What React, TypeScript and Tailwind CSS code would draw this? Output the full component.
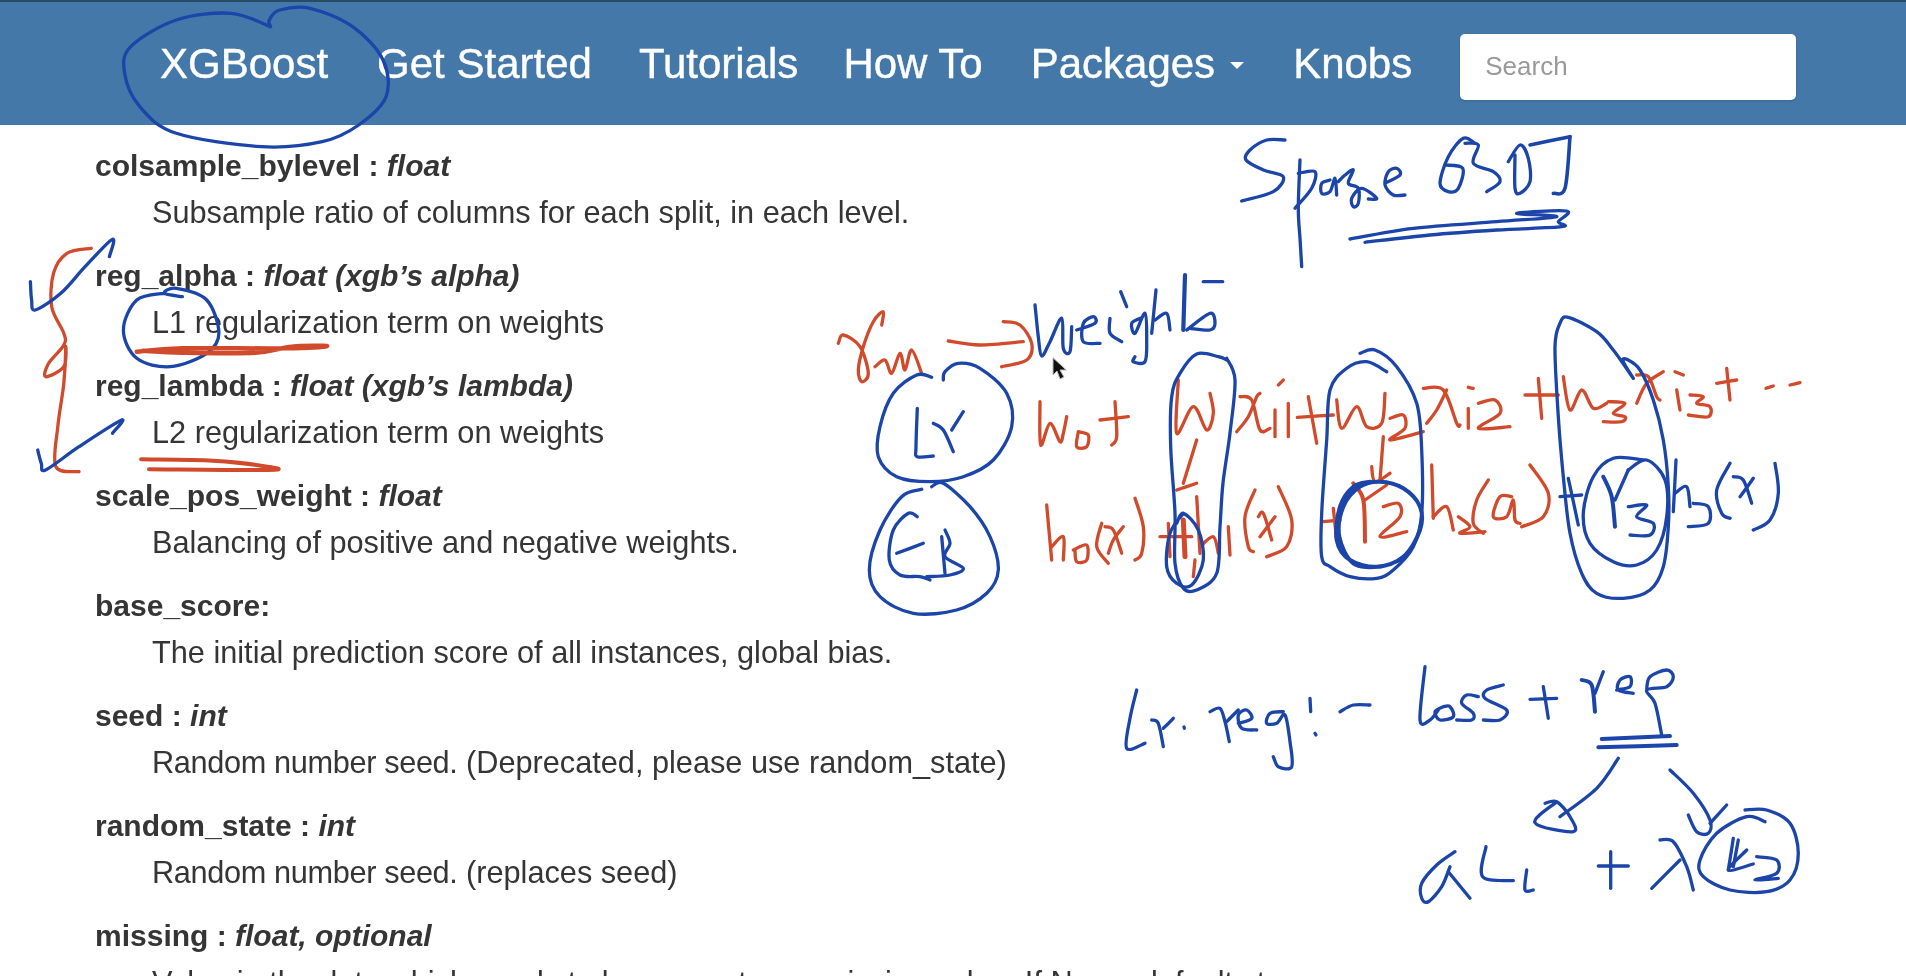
const PARAMS = [
  { name: 'colsample_bylevel', type: ' : ', em: 'float', lead: '', desc: 'Subsample ratio of columns for each split, in each level.' },
  { name: 'reg_alpha', type: ' : ', em: 'float (xgb’s alpha)', lead: '', desc: 'L1 regularization term on weights' },
  { name: 'reg_lambda', type: ' : ', em: 'float (xgb’s lambda)', lead: '', desc: 'L2 regularization term on weights' },
  { name: 'scale_pos_weight', type: ' : ', em: 'float', lead: '', desc: 'Balancing of positive and negative weights.' },
  { name: 'base_score', type: ':', em: '', lead: '', desc: 'The initial prediction score of all instances, global bias.' },
  { name: 'seed', type: ' : ', em: 'int', lead: 'Random number seed.', desc: ' (Deprecated, please use random_state)' },
  { name: 'random_state', type: ' : ', em: 'int', lead: 'Random number seed.', desc: ' (replaces seed)' },
  { name: 'missing', type: ' : ', em: 'float, optional', lead: '', desc: 'Value in the data which needs to be present as a missing value. If None, defaults to np.nan.' },
];

const BLUE = '#1b45a9';
const RED = '#d04a2b';

// pen annotations, traced from crops of the picture: [offset x, offset y, scale x, scale y]
type Frame = [number, number, number, number];
const A: Frame = [0, 0, 0.608, 1 / 3];
const C: Frame = [830, 260, 1 / 3, 1 / 3];
const D: Frame = [1220, 300, 1 / 3, 1 / 3];
const E: Frame = [1500, 300, 1 / 3, 1 / 3];
const G: Frame = [1230, 125, 1 / 3, 1 / 3];
const H: Frame = [1110, 655, 1 / 3, 1 / 3];
const I: Frame = [1400, 660, 1 / 3, 1 / 3];
const J: Frame = [1030, 270, 1 / 3, 1 / 3];

const STROKES: [Frame, string, number[], number?][] = [
  // XGBoost ring and the left margin marks
  [A, BLUE, [445, 80, 380, 40, 290, 60, 215, 140, 205, 220, 230, 320, 290, 400, 430, 440, 530, 425, 590, 375, 635, 290, 630, 180, 580, 80, 510, 25, 460, 30, 443, 60, 445, 80]],
  [A, RED, [150, 745, 110, 760, 88, 820, 85, 920, 105, 1000, 105, 1035, 80, 1090, 75, 1130, 105, 1100, 108, 1040, 105, 1150, 95, 1280, 92, 1400, 130, 1415]],
  [A, BLUE, [50, 845, 52, 900, 58, 930, 100, 880, 140, 800, 185, 718, 180, 770]],
  [A, BLUE, [62, 1350, 68, 1390, 75, 1410, 130, 1340, 200, 1260, 185, 1300]],
  [A, BLUE, [300, 890, 270, 880, 290, 865, 340, 900, 360, 1000, 340, 1060, 280, 1100, 225, 1075, 203, 990, 225, 900, 270, 880]],
  [A, RED, [225, 1055, 300, 1045, 470, 1045, 538, 1038, 480, 1040, 420, 1058, 300, 1058, 235, 1052], 4.5],
  [A, RED, [232, 1378, 350, 1382, 440, 1400, 440, 1410, 245, 1408], 4],

  // Sparse GBDT
  [G, BLUE, [165, 45, 110, 45, 60, 75, 48, 105, 100, 135, 160, 155, 130, 200, 35, 228]],
  [G, BLUE, [210, 105, 205, 250, 210, 340, 215, 425]],
  [G, BLUE, [205, 145, 255, 140, 245, 190, 195, 250]],
  [G, BLUE, [300, 165, 275, 175, 275, 205, 300, 200, 315, 160, 320, 210]],
  [G, BLUE, [325, 170, 345, 150, 370, 135, 355, 175, 385, 190, 385, 235, 370, 245, 365, 220, 395, 190, 440, 220, 415, 222]],
  [G, BLUE, [465, 175, 510, 150, 500, 130, 475, 140, 465, 180, 490, 210, 525, 210]],
  [G, BLUE, [735, 55, 700, 40, 655, 95, 630, 175, 655, 200, 685, 190, 698, 130, 645, 120]],
  [G, BLUE, [705, 55, 745, 60, 730, 115, 790, 140, 810, 170, 770, 200]],
  [G, BLUE, [835, 110, 870, 60, 895, 100, 900, 170, 870, 205, 855, 190, 855, 90]],
  [G, BLUE, [900, 60, 1020, 35], 3.6],
  [G, BLUE, [1020, 35, 1005, 190, 970, 205], 3.6],
  [G, BLUE, [360, 342, 550, 310, 800, 290, 980, 275, 860, 265, 1010, 258, 985, 290, 995, 305, 800, 315, 600, 330, 405, 352]],

  // Weights and the gamma-m arrow
  [J, BLUE, [15, 105, 25, 200, 35, 258, 60, 215, 95, 145, 100, 235, 120, 245, 125, 170]],
  [J, BLUE, [140, 180, 195, 160, 190, 140, 160, 160, 160, 215, 210, 220]],
  [J, BLUE, [240, 145, 240, 190, 275, 215]],
  [J, BLUE, [272, 65, 290, 110]],
  [J, BLUE, [330, 145, 305, 160, 315, 190, 345, 130, 350, 210, 345, 275, 310, 275, 315, 260]],
  [J, BLUE, [378, 60, 365, 190]],
  [J, BLUE, [375, 150, 410, 130, 420, 180]],
  [J, BLUE, [465, 15, 460, 180], 4.2],
  [J, BLUE, [470, 180, 540, 130, 555, 160, 540, 180, 480, 175]],
  [J, BLUE, [520, 35, 578, 35]],
  [C, RED, [25, 250, 40, 225, 90, 260, 115, 340, 95, 365, 85, 330, 100, 260, 130, 185, 160, 155, 155, 195]],
  [C, RED, [135, 320, 165, 300, 185, 340, 210, 280, 225, 330, 245, 270, 275, 340]],
  [C, RED, [355, 243, 450, 255, 580, 245]],
  [C, RED, [520, 185, 570, 195, 605, 250, 590, 300, 515, 320]],

  // Lr and GB bubbles
  [C, BLUE, [305, 352, 260, 345, 190, 400, 150, 500, 145, 590, 200, 650, 300, 665, 400, 650, 490, 600, 545, 500, 530, 400, 450, 325, 385, 310, 345, 335, 340, 360]],
  [C, BLUE, [262, 445, 258, 560, 262, 590, 310, 588]],
  [C, BLUE, [310, 490, 340, 510, 370, 575]],
  [C, BLUE, [365, 510, 400, 455]],
  [C, BLUE, [275, 688, 215, 710, 150, 810, 118, 930, 150, 1010, 250, 1060, 380, 1050, 470, 1000, 505, 930, 480, 830, 420, 740, 340, 670, 305, 680]],
  [C, BLUE, [262, 770, 235, 760, 190, 810, 178, 900, 210, 945, 270, 950, 300, 960]],
  [C, BLUE, [200, 880, 280, 850]],
  [C, BLUE, [335, 830, 345, 940]],
  [C, BLUE, [345, 810, 360, 850, 345, 890, 400, 925, 360, 945, 290, 950]],

  // w0 + w1 x_i1 row
  [C, RED, [630, 425, 632, 555, 660, 490, 690, 545, 700, 520, 710, 470]],
  [C, RED, [745, 515, 775, 525, 770, 560, 740, 560, 745, 515]],
  [C, RED, [810, 480, 895, 470]],
  [C, RED, [855, 425, 860, 530, 845, 555]],
  [C, RED, [1045, 360, 1040, 520, 1090, 440, 1130, 510, 1150, 460, 1140, 400]],
  [C, RED, [1100, 540, 1060, 670]],
  [C, RED, [1040, 690, 1100, 670]],
  [D, RED, [50, 395, 85, 350, 110, 290, 120, 280]],
  [D, RED, [60, 290, 95, 300, 120, 390, 150, 385]],
  [D, RED, [165, 330, 165, 410]],
  [D, RED, [175, 255, 190, 240]],
  [D, RED, [205, 310, 205, 410]],
  [D, RED, [232, 352, 340, 345]],
  [D, RED, [265, 290, 290, 430]],
  [D, RED, [350, 300, 365, 385, 410, 320, 440, 380, 485, 370, 495, 280]],
  [D, RED, [510, 355, 550, 345, 555, 385, 510, 420, 610, 395]],
  [D, RED, [610, 265, 670, 270, 710, 370, 720, 375]],
  [D, RED, [680, 270, 650, 330, 620, 370]],
  [D, RED, [745, 325, 745, 385]],
  [D, RED, [745, 262, 760, 265]],
  [D, RED, [775, 310, 825, 300, 840, 340, 775, 385, 870, 380]],
  [D, RED, [915, 285, 1015, 285]],
  [D, RED, [955, 235, 965, 355]],
  [E, RED, [190, 230, 210, 330, 245, 270, 280, 325, 320, 310]],
  [E, RED, [325, 305, 375, 310, 340, 340, 375, 350, 365, 365, 310, 365]],
  [E, RED, [410, 225, 445, 230, 470, 290, 480, 300]],
  [E, RED, [490, 215, 440, 250, 410, 310]],
  [E, RED, [530, 270, 540, 330]],
  [E, RED, [525, 215, 550, 225]],
  [E, RED, [570, 285, 610, 290, 590, 310, 630, 320, 625, 350, 565, 345]],
  [E, RED, [650, 250, 710, 240]],
  [E, RED, [680, 205, 690, 300]],
  [E, RED, [798, 265, 820, 258]],
  [E, RED, [870, 255, 900, 248]],

  // h0 + gamma h row
  [C, RED, [650, 735, 665, 900]],
  [C, RED, [665, 860, 700, 830, 700, 900]],
  [C, RED, [730, 870, 770, 855, 770, 900, 740, 905, 735, 870]],
  [C, RED, [815, 790, 800, 860, 835, 910]],
  [C, RED, [825, 800, 850, 810, 875, 880]],
  [C, RED, [880, 800, 850, 840, 835, 880]],
  [C, RED, [915, 715, 940, 800, 935, 880, 915, 900]],
  [C, RED, [990, 830, 1085, 830]],
  [C, RED, [1015, 790, 1020, 890]],
  [C, RED, [1060, 780, 1065, 890], 5],
  [C, RED, [1100, 710, 1110, 880]],
  [C, RED, [1110, 860, 1150, 830, 1165, 880]],
  [C, RED, [1095, 900, 1090, 950]],
  [D, RED, [25, 680, 30, 765]],
  [D, RED, [105, 570, 75, 650, 85, 740, 100, 755]],
  [D, RED, [115, 650, 130, 640, 155, 720]],
  [D, RED, [165, 650, 120, 710]],
  [D, RED, [175, 560, 215, 660, 200, 740, 140, 770]],
  [D, RED, [310, 665, 360, 660]],
  [D, RED, [340, 625, 350, 720]],
  [D, RED, [490, 410, 480, 540]],
  [D, RED, [455, 500, 465, 545, 510, 520]],
  [D, RED, [400, 550, 430, 600, 435, 725], 4],
  [D, RED, [500, 555, 435, 600]],
  [D, RED, [490, 620, 535, 610, 540, 650, 480, 710, 560, 695]],
  [D, RED, [635, 495, 640, 655]],
  [D, RED, [640, 650, 680, 620, 700, 690]],
  [D, RED, [715, 650, 750, 680, 720, 700, 795, 695]],
  [D, RED, [805, 540, 770, 600, 760, 670, 790, 700]],
  [D, RED, [875, 590, 840, 590, 820, 650, 860, 650, 880, 600, 885, 660, 900, 670]],
  [D, RED, [930, 495, 985, 580, 970, 650, 905, 680]],

  // tall rings round the weights
  [C, BLUE, [1190, 300, 1165, 290, 1100, 282, 1050, 340, 1025, 410, 1022, 560, 1035, 760, 1035, 910, 1060, 985, 1100, 990, 1160, 940, 1170, 800, 1179, 669, 1200, 519, 1215, 360, 1190, 295]],
  [C, BLUE, [1060, 760, 1020, 820, 1010, 920, 1040, 970, 1085, 975, 1120, 900, 1105, 810, 1060, 760, 1040, 790]],
  [D, BLUE, [420, 160, 465, 150, 530, 200, 590, 310, 605, 450, 605, 640, 580, 740, 520, 810, 470, 835, 390, 830, 330, 800, 305, 770, 305, 640, 320, 420, 330, 270, 380, 205, 440, 185, 500, 215]],
  [D, BLUE, [450, 545, 400, 560, 360, 620, 350, 720, 390, 780, 470, 800, 550, 770, 600, 690, 600, 620, 550, 565, 480, 545, 420, 560, 370, 620, 358, 710, 400, 790, 480, 800, 540, 780], 4],
  [E, BLUE, [400, 235, 370, 185, 380, 178, 420, 210, 460, 300, 490, 420, 505, 560, 505, 680, 490, 800, 450, 870, 370, 895, 290, 880, 245, 820, 210, 700, 190, 530, 175, 350, 165, 140, 180, 70, 205, 52, 290, 95, 340, 150, 400, 235]],
  [E, BLUE, [430, 480, 340, 475, 280, 530, 250, 640, 270, 730, 340, 785, 410, 795, 470, 750, 500, 650, 495, 540, 440, 480, 385, 510]],
  [E, BLUE, [310, 530, 335, 590, 345, 680], 4],
  [E, BLUE, [385, 510, 345, 600]],
  [E, BLUE, [385, 620, 440, 615, 410, 650, 460, 670, 450, 705, 390, 705]],
  [E, BLUE, [180, 590, 245, 585]],
  [E, BLUE, [205, 535, 235, 675]],
  [E, BLUE, [528, 480, 520, 635]],
  [E, BLUE, [525, 580, 560, 560, 570, 620]],
  [E, BLUE, [580, 610, 625, 620, 625, 670, 565, 680]],
  [E, BLUE, [690, 490, 650, 570, 665, 640, 690, 655]],
  [E, BLUE, [700, 530, 730, 540, 755, 610]],
  [E, BLUE, [760, 535, 735, 570, 720, 590]],
  [E, BLUE, [825, 490, 835, 580, 810, 660, 760, 690]],

  // Lr. reg :-
  [H, BLUE, [80, 105, 60, 190, 50, 280, 105, 265]],
  [H, BLUE, [125, 195, 145, 205, 160, 275]],
  [H, BLUE, [160, 220, 190, 190]],
  [H, BLUE, [222, 216, 223, 220]],
  [H, BLUE, [300, 170, 330, 160, 345, 200, 358, 260]],
  [H, BLUE, [350, 200, 385, 165]],
  [H, BLUE, [385, 205, 425, 190, 410, 165, 385, 180, 395, 220, 440, 225]],
  [H, BLUE, [520, 170, 480, 175, 470, 205, 500, 205, 525, 180, 540, 260, 545, 335, 505, 335, 490, 305]],
  [H, BLUE, [600, 130, 602, 170]],
  [H, BLUE, [615, 235, 618, 240]],
  [H, BLUE, [690, 170, 730, 150, 780, 150]],

  // loss + reg and the two arrows
  [I, BLUE, [75, 20, 60, 180, 90, 180, 115, 150]],
  [I, BLUE, [130, 140, 105, 155, 120, 180, 160, 170, 150, 140, 130, 140]],
  [I, BLUE, [235, 110, 200, 105, 185, 130, 220, 160, 215, 180, 170, 180]],
  [I, BLUE, [310, 75, 260, 90, 255, 115, 320, 150, 300, 180, 250, 180]],
  [I, BLUE, [390, 118, 470, 115]],
  [I, BLUE, [430, 80, 445, 175]],
  [I, BLUE, [545, 60, 575, 75, 585, 155], 4],
  [I, BLUE, [585, 100, 610, 35]],
  [I, BLUE, [650, 90, 690, 80, 690, 50, 660, 60, 655, 90, 700, 100]],
  [I, BLUE, [740, 85, 750, 50, 800, 30, 820, 50, 800, 80, 740, 90, 765, 130, 785, 225]],
  [I, BLUE, [605, 237, 810, 228], 4],
  [I, BLUE, [595, 262, 830, 255], 4],
  [I, BLUE, [655, 295, 590, 385, 480, 470]],
  [I, BLUE, [470, 425, 405, 488, 520, 515, 510, 470, 470, 425, 435, 430]],
  [I, BLUE, [810, 330, 880, 400, 930, 480, 925, 520, 890, 515, 865, 465]],
  [I, BLUE, [930, 490, 980, 435]],

  // alpha L1 + lambda L2
  [I, BLUE, [165, 575, 110, 615, 65, 670, 65, 715, 85, 725, 125, 680, 150, 620]],
  [I, BLUE, [145, 635, 210, 715]],
  [I, BLUE, [258, 560, 248, 650, 340, 662]],
  [I, BLUE, [380, 630, 375, 690, 400, 690]],
  [I, BLUE, [595, 618, 685, 618]],
  [I, BLUE, [632, 575, 632, 685]],
  [I, BLUE, [780, 540, 820, 545, 860, 620, 880, 690]],
  [I, BLUE, [840, 600, 755, 685]],
  [I, BLUE, [1095, 485, 1040, 470, 950, 520, 900, 600, 910, 650, 990, 690, 1100, 695, 1170, 660, 1195, 580, 1170, 490, 1100, 450, 1035, 450]],
  [I, BLUE, [1000, 535, 985, 630]],
  [I, BLUE, [1015, 540, 1000, 620]],
  [I, BLUE, [1040, 570, 985, 630, 1060, 612]],
  [I, BLUE, [1070, 590, 1130, 600, 1130, 640, 1065, 660, 1135, 655]],
];

// catmull-rom through the traced points, gives the pen line its curve
const toPath = ([ox, oy, sx, sy]: Frame, flat: number[]) => {
  const p: [number, number][] = [];
  for (let i = 0; i < flat.length; i += 2) p.push([ox + flat[i] * sx, oy + flat[i + 1] * sy]);
  let d = `M${p[0][0].toFixed(1)} ${p[0][1].toFixed(1)}`;
  for (let i = 0; i < p.length - 1; i++) {
    const a = p[Math.max(i - 1, 0)];
    const b = p[i];
    const c = p[i + 1];
    const e = p[Math.min(i + 2, p.length - 1)];
    d += `C${(b[0] + (c[0] - a[0]) / 6).toFixed(1)} ${(b[1] + (c[1] - a[1]) / 6).toFixed(1)} ${(c[0] - (e[0] - b[0]) / 6).toFixed(1)} ${(c[1] - (e[1] - b[1]) / 6).toFixed(1)} ${c[0].toFixed(1)} ${c[1].toFixed(1)}`;
  }
  return d;
};

const Ink = () => (
  <svg viewBox="0 0 1906 976" fill="none" strokeLinecap="round" strokeLinejoin="round" className="absolute inset-0 w-[1906px] h-[976px]">
    {STROKES.map(([frame, color, pts, width], i) => (
      <path key={i} d={toPath(frame, pts)} stroke={color} strokeWidth={width ?? 3.3} />
    ))}
    <path d="M1053 358l0 17 4-4 3 8 4-2-4-7 6 0z" fill="#111" stroke="#bbb" strokeWidth={1} />
  </svg>
);

const App = () => {
  return (
    <div className="relative w-[1906px] h-[976px] overflow-hidden bg-white font-['Liberation_Sans',sans-serif] blur-[0.7px]">
      <header className="h-[125px] bg-[#4478a8] border-t-2 border-[#2b4a68] flex items-center pl-[160px] gap-[47px] text-white text-[42px] [-webkit-text-stroke:0.4px_white]">
        <span className="mr-[2px]">XGBoost</span>
        <span>Get Started</span>
        <span className="mr-[-2px]">Tutorials</span>
        <span className="mr-[1px]">How To</span>
        <span className="flex items-center gap-[15px] mr-[2px]">
          Packages
          <span className="w-0 h-0 mt-[4px] border-x-[7px] border-x-transparent border-t-[7px] border-t-white" />
        </span>
        <span className="mr-[1px]">Knobs</span>
        <div className="w-[336px] h-[66px] mt-[6px] bg-white rounded-[5px] shadow-sm flex items-center pl-[25px] text-[26px] text-[#999] [-webkit-text-stroke:0px]">
          Search
        </div>
      </header>
      <main className="pl-[95px] pt-[18px] text-[#353535]">
        {PARAMS.map((p) => (
          <div key={p.name} className="mb-[17px]">
            <div className="h-[47px] leading-[45px] text-[30px] font-bold whitespace-pre">
              {p.name}
              {p.type}
              <em>{p.em}</em>
            </div>
            <div className="h-[46px] leading-[46px] text-[30.7px] pl-[57px] whitespace-pre">
              <span className="tracking-[-0.35px]">{p.lead}</span>
              {p.desc}
            </div>
          </div>
        ))}
      </main>
      <Ink />
    </div>
  );
};

export default App;
